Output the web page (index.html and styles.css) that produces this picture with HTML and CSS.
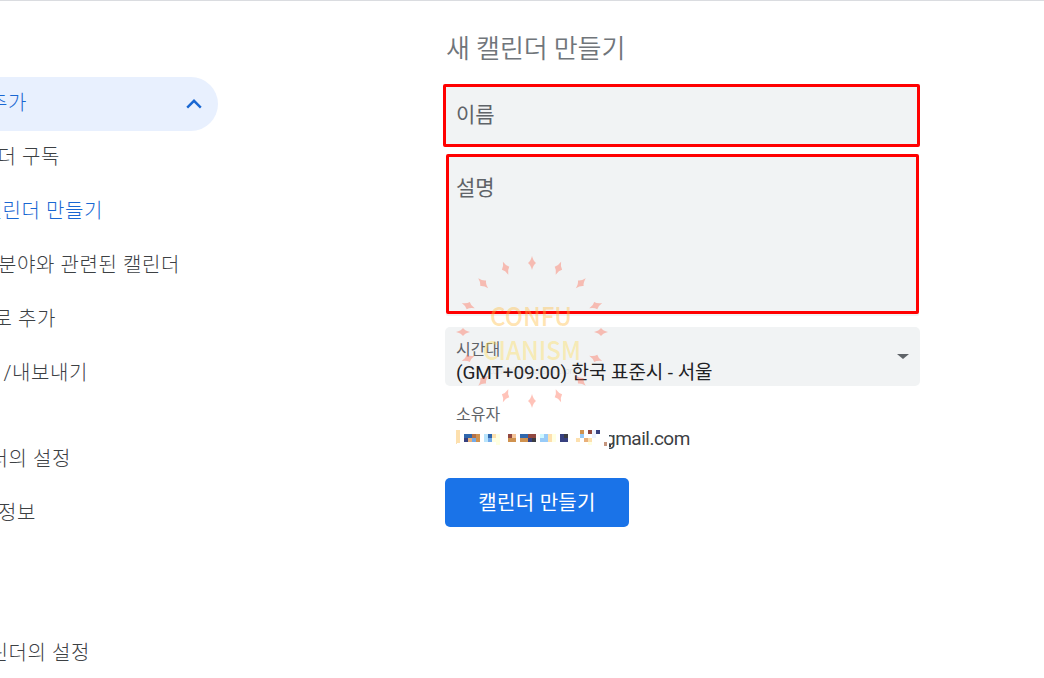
FILE: index.html
```html
<!DOCTYPE html>
<html lang="ko">
<head>
    <meta charset="UTF-8">
    <meta name="viewport" content="width=device-width, initial-scale=1.0">
    <title>새 캘린더 만들기</title>
    <link rel="stylesheet" href="styles.css">
</head>
<body>
    <div class="page">
        <nav class="sidebar">
            <div class="nav-item nav-header">
                <span class="nav-text w-add">추가</span>
                <svg class="chevron" width="16" height="10" viewBox="0 0 16 10">
                    <path d="M1.2 8.6 L8 1.8 L14.8 8.6" fill="none" stroke="#1967d2" stroke-width="2.4"/>
                </svg>
            </div>
            <div class="nav-item"><span class="nav-text w-subscribe">더 구독</span></div>
            <div class="nav-item active"><span class="nav-text w-create">캘린더 만들기</span></div>
            <div class="nav-item"><span class="nav-text w-interest">분야와 관련된 캘린더</span></div>
            <div class="nav-item"><span class="nav-text w-url">로 추가</span></div>
            <div class="nav-item"><span class="nav-text w-import">/내보내기</span></div>
            <div class="nav-item group"><span class="nav-text w-settings">더의 설정</span></div>
            <div class="nav-item"><span class="nav-text w-info">정보</span></div>
            <div class="nav-item group-last"><span class="nav-text w-other">린더의 설정</span></div>
        </nav>

        <main class="content">
            <h1>새 캘린더 만들기</h1>
            <div class="field name-field">이름</div>
            <div class="field desc-field">설명</div>
            <div class="select-field">
                <div>
                    <div class="label">시간대</div>
                    <div class="value">(GMT+09:00) 한국 표준시 - 서울</div>
                </div>
                <span class="arrow"></span>
            </div>
            <div class="owner">
                <div class="label">소유자</div>
                <div class="email">
                    <svg class="mosaic" width="156" height="20" viewBox="0 0 156 20" shape-rendering="crispEdges">
                        <path fill="#fde0ae" d="M0 2h4v13h-3v1h-1zM36 6h4v4h-4zM92 6h4v8h-4zM120 10h4v4h-4zM132 10h4v4h-4z"/>
                        <path fill="#2f67ad" d="M8 6h8v4h-8zM32 6h4v4h-4zM64 6h8v4h-8z"/>
                        <path fill="#37407f" d="M8 10h4v4h-4zM72 10h4v4h-4zM104 6h4v8h-4zM108 10h4v4h-4zM140 2h4v4h-4z"/>
                        <path fill="#b3724a" d="M16 6h4v4h-4z"/>
                        <path fill="#d0924f" d="M20 6h4v8h-4zM52 10h8v4h-8zM64 10h8v4h-8zM124 2h4v4h-4z"/>
                        <path fill="#e9b079" d="M12 10h4v4h-4zM128 10h4v4h-4z"/>
                        <path fill="#73abea" d="M16 10h4v4h-4zM32 10h4v4h-4z"/>
                        <path fill="#b9e4fc" d="M28 6h4v8h-4z"/>
                        <path fill="#98cbf8" d="M84 10h8v4h-8zM88 6h4v4h-4zM124 6h4v4h-4z"/>
                        <path fill="#cdf8ff" d="M84 6h4v4h-4z"/>
                        <path fill="#ffffe2" d="M36 10h4v4h-4zM40 6h4v11h-4zM96 6h4v8h-4zM132 14h4v3h-4z"/>
                        <path fill="#924840" d="M52 6h4v4h-4zM72 6h8v4h-8zM132 2h4v4h-4z"/>
                        <path fill="#f3c499" d="M56 6h4v4h-4z"/>
                        <path fill="#3c3d42" d="M76 10h4v4h-4zM108 6h4v4h-4zM153 16h2v3h-2z"/>
                        <path fill="#edf2ff" d="M136 2h4v8h-4z"/>
                        <path fill="#c5967e" d="M148 14h3v4h-3z"/>
                    </svg>
                    <span class="domain">gmail.com</span>
                </div>
            </div>
            <button class="create-button">캘린더 만들기</button>
        </main>
    </div>

    <svg class="watermark" width="160" height="160" viewBox="-80 -80 160 160">
        <defs>
            <path id="spark" d="M0 -76 Q1.2 -71 4 -69 Q1.2 -67 0 -62 Q-1.2 -67 -4 -69 Q-1.2 -71 0 -76z"/>
        </defs>
        <g fill="#ff5a3c" fill-opacity="0.36">
            <use href="#spark"/>
            <use href="#spark" transform="rotate(22.5)"/>
            <use href="#spark" transform="rotate(45)"/>
            <use href="#spark" transform="rotate(67.5)"/>
            <use href="#spark" transform="rotate(90)"/>
            <use href="#spark" transform="rotate(112.5)"/>
            <use href="#spark" transform="rotate(135)"/>
            <use href="#spark" transform="rotate(157.5)"/>
            <use href="#spark" transform="rotate(180)"/>
            <use href="#spark" transform="rotate(202.5)"/>
            <use href="#spark" transform="rotate(225)"/>
            <use href="#spark" transform="rotate(247.5)"/>
            <use href="#spark" transform="rotate(270)"/>
            <use href="#spark" transform="rotate(292.5)"/>
            <use href="#spark" transform="rotate(315)"/>
            <use href="#spark" transform="rotate(337.5)"/>
        </g>
        <text class="mark-top" x="-42" y="-6" textLength="82" lengthAdjust="spacingAndGlyphs">CONFU</text>
        <text class="mark-bottom" x="-49" y="28" textLength="98" lengthAdjust="spacingAndGlyphs">CIANISM</text>
        <text class="mark-url" x="-43" y="42" textLength="88">confucianism.tistory.com</text>
    </svg>
</body>
</html>
```
FILE: styles.css
```css
* {
    box-sizing: border-box;
}

body {
    margin: 0;
    height: 678px;
    overflow: hidden;
    border-top: 1px solid #dadce0;
    background-color: white;
    color: #3c4043;
    font-family: Roboto, "Noto Sans CJK KR", sans-serif;
}

.page {
    display: flex;
}

.sidebar {
    width: 218px;
    margin-right: 225px;
    padding-top: 76px;
}

.nav-item {
    display: flex;
    align-items: center;
    justify-content: space-between;
    height: 54px;
    padding-bottom: 6px;
    font-size: 20px;
    font-weight: 300;
    letter-spacing: 0.6px;
}

.nav-header {
    padding-right: 16px;
    border-radius: 0 27px 27px 0;
    background-color: #e8f0fe;
    color: #1967d2;
}

.chevron {
    position: relative;
    top: 3px;
}

.active {
    color: #1967d2;
}

.group {
    margin-top: 32px;
}

.group-last {
    margin-top: 86px;
}

/* labels keep their right edge, the start is cut off */
.nav-text {
    display: flex;
    justify-content: flex-end;
    overflow: hidden;
    white-space: nowrap;
}

.w-add { width: 27px; }
.w-subscribe { width: 60px; }
.w-create { width: 103px; }
.w-interest { width: 180px; }
.w-url { width: 56px; }
.w-import { width: 88px; }
.w-settings { width: 71px; }
.w-info { width: 36px; }
.w-other { width: 90px; }

.content {
    width: 477px;
    padding-top: 29px;
}

h1 {
    margin: 0 0 16px 3px;
    height: 38px;
    line-height: 38px;
    color: #70757a;
    font-size: 26px;
    font-weight: 350;
    letter-spacing: -0.1px;
}

.field {
    border: 3px solid #ff0000;
    border-radius: 2px;
    background-color: #f1f3f4;
    color: #5f6368;
    font-size: 21px;
    line-height: 30px;
}

.name-field {
    height: 63px;
    padding: 13px 10px;
}

.desc-field {
    width: 473px;
    height: 160px;
    margin: 7px 0 0 3px;
    padding: 16px 7px;
    box-shadow: 0 2px 0 #f1f3f4;
}

.select-field {
    display: flex;
    justify-content: space-between;
    height: 59px;
    margin: 13px 0 0 2px;
    padding: 12px 11px 0;
    border-radius: 5px;
    background-color: #f1f3f4;
}

.label {
    color: #5f6368;
    font-size: 16px;
    line-height: 22px;
}

.value {
    color: #202124;
    font-size: 19px;
    line-height: 24px;
    letter-spacing: -0.08px;
    white-space: nowrap;
}

.arrow {
    height: 5px;
    margin-top: 15px;
    border: 6px solid transparent;
    border-top: 5px solid #5f6368;
    border-bottom: 0;
}

.owner {
    margin: 18px 0 0 13px;
}

.email {
    display: flex;
    height: 28px;
    font-size: 19px;
    line-height: 26px;
    letter-spacing: -0.5px;
}

.mosaic {
    flex: none;
    margin: 2px -7px 0 0;
}

/* the first letter is partly hidden by the mosaic */
.domain {
    height: 24px;
    clip-path: inset(0 0 0 4px);
}

.create-button {
    display: block;
    width: 184px;
    height: 49px;
    margin: 24px 0 0 2px;
    padding: 0 0 2px;
    border: none;
    border-radius: 5px;
    background-color: #1a73e8;
    color: white;
    font-family: inherit;
    font-size: 20px;
    letter-spacing: 0.3px;
}

.watermark {
    position: absolute;
    top: 252px;
    left: 451.5px;
    font-family: "Noto Sans CJK KR", sans-serif;
    pointer-events: none;
}

.mark-top {
    fill: rgba(255, 190, 70, 0.42);
    font-size: 26px;
    font-weight: 500;
}

.mark-bottom {
    fill: rgba(255, 220, 80, 0.4);
    font-size: 26px;
    font-weight: 500;
}

.mark-url {
    fill: rgba(150, 150, 150, 0.2);
    font-size: 8px;
}
```
